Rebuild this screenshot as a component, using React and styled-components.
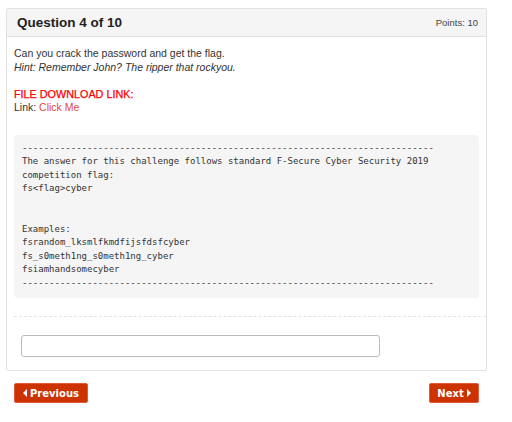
import React from "react";
import styled, { createGlobalStyle } from "styled-components";

const GlobalStyle = createGlobalStyle`
  html, body {
    margin: 0;
    padding: 0;
    background: #fff;
  }
  body {
    font-family: "Liberation Sans", Arial, sans-serif;
    color: #333;
  }
`;

const Page = styled.div`
  width: 512px;
  height: 422px;
  padding: 8px 25px 0 6px;
  box-sizing: border-box;
`;

const Panel = styled.div`
  border: 1px solid #e1e1e1;
  border-radius: 2px;
  background: #fff;
`;

const PanelHead = styled.div`
  display: flex;
  justify-content: space-between;
  align-items: center;
  height: 27px;
  padding: 0 8px 0 10px;
  background: #f5f5f5;
  border-bottom: 1px solid #e1e1e1;
`;

const Title = styled.h3`
  margin: 0;
  font-size: 13.5px;
  font-weight: bold;
  color: #222;
`;

const Points = styled.span`
  font-size: 9.5px;
  color: #444;
`;

const PanelBody = styled.div`
  padding: 10px 7px 13px 7px;
  font-size: 10.5px;
  line-height: 13.5px;
`;

const Para = styled.p`
  margin: 0 0 13.5px 0;
`;

const Hint = styled.em`
  font-style: italic;
`;

const Alert = styled.span`
  color: #f00;
  font-size: 10.8px;
  -webkit-text-stroke: 0.25px #f00;
`;

const LinkA = styled.a`
  color: #e04a3c;
  text-decoration: none;
`;

const Pre = styled.pre`
  margin: 20px 0 0 0;
  padding: 7px 8px 8px 8px;
  background: #f5f5f5;
  border-radius: 4px;
  font-family: "DejaVu Sans Mono", "Liberation Mono", monospace;
  font-size: 9px;
  line-height: 13.5px;
  color: #333;
  white-space: pre;
  overflow: hidden;
`;

const Divider = styled.hr`
  margin: 18px -7px 0 0;
  border: 0;
  border-top: 1px dashed #e3e3e3;
`;

const Answer = styled.input`
  display: block;
  margin: 18px 0 0 7px;
  width: 359px;
  height: 22px;
  box-sizing: border-box;
  border: 1px solid #bbb;
  border-radius: 3px;
  background: #fff;
`;

const Nav = styled.div`
  display: flex;
  justify-content: space-between;
  margin-top: 12px;
  padding: 0 8px;
`;

const NavButton = styled.button`
  display: flex;
  align-items: center;
  justify-content: center;
  gap: 3px;
  height: 20px;
  width: ${(p) => p.$w}px;
  padding: 0;
  background: #cc3300;
  border: 1px solid #e05a3a;
  border-radius: 2px;
  color: #fff;
  font-family: "DejaVu Sans", Verdana, sans-serif;
  font-weight: bold;
  font-size: 10px;
  cursor: pointer;
`;

const Caret = ({ dir }) => (
  <svg width="4" height="8" viewBox="0 0 4 8">
    {dir === "left" ? (
      <polygon points="4,0 0,4 4,8" fill="#fff" />
    ) : (
      <polygon points="0,0 4,4 0,8" fill="#fff" />
    )}
  </svg>
);

const dash = "-".repeat(76);

const preText = `${dash}
The answer for this challenge follows standard F-Secure Cyber Security 2019
competition flag:
fs<flag>cyber


Examples:
fsrandom_lksmlfkmdfijsfdsfcyber
fs_s0meth1ng_s0meth1ng_cyber
fsiamhandsomecyber
${dash}`;

export default function App() {
  return (
    <>
      <GlobalStyle />
      <Page>
        <Panel>
          <PanelHead>
            <Title>Question 4 of 10</Title>
            <Points>Points: 10</Points>
          </PanelHead>
          <PanelBody>
            <Para>
              Can you crack the password and get the flag.
              <br />
              <Hint>Hint: Remember John? The ripper that rockyou.</Hint>
            </Para>
            <div>
              <Alert>FILE DOWNLOAD LINK:</Alert>
              <br />
              Link: <LinkA href="#">Click Me</LinkA>
            </div>
            <Pre>{preText}</Pre>
            <Divider />
            <Answer type="text" />
          </PanelBody>
        </Panel>
        <Nav>
          <NavButton $w={74}>
            <Caret dir="left" />
            Previous
          </NavButton>
          <NavButton $w={50}>
            Next
            <Caret dir="right" />
          </NavButton>
        </Nav>
      </Page>
    </>
  );
}
